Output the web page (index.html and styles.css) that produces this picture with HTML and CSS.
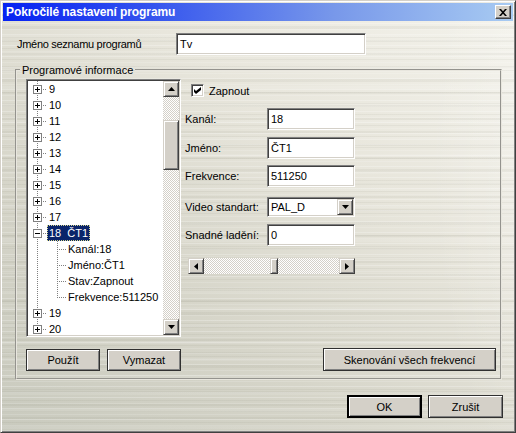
FILE: index.html
```html
<!DOCTYPE html>
<html>
<head>
<meta charset="utf-8">
<link rel="stylesheet" href="styles.css">
</head>
<body>
<div class="window">
  <div class="titlebar">
    <span class="title">Pokročilé nastavení programu</span>
    <span class="close"><svg width="8" height="7" viewBox="0 0 8 7"><path d="M0 0h2l2 2.3L6 0h2L5 3.5 8 7H6L4 4.7 2 7H0l3-3.5z" fill="#000"/></svg></span>
  </div>
  <div class="client">
    <div class="name-row">
      <span class="name-label">Jméno seznamu programů</span>
      <div class="edit name-edit">Tv</div>
    </div>
    <fieldset class="group">
      <legend>Programové informace</legend>
      <div class="group-grid">
        <div class="tree">
          <div class="tree-items">
            <div class="row"><span class="c root"><svg class="pbox" width="9" height="9"><rect x="0.5" y="0.5" width="8" height="8" fill="#fff" stroke="#808080"/><path d="M2 4.5h5M4.5 2v5" stroke="#000"/></svg></span><span class="t">9</span></div>
            <div class="row"><span class="c root"><svg class="pbox" width="9" height="9"><rect x="0.5" y="0.5" width="8" height="8" fill="#fff" stroke="#808080"/><path d="M2 4.5h5M4.5 2v5" stroke="#000"/></svg></span><span class="t">10</span></div>
            <div class="row"><span class="c root"><svg class="pbox" width="9" height="9"><rect x="0.5" y="0.5" width="8" height="8" fill="#fff" stroke="#808080"/><path d="M2 4.5h5M4.5 2v5" stroke="#000"/></svg></span><span class="t">11</span></div>
            <div class="row"><span class="c root"><svg class="pbox" width="9" height="9"><rect x="0.5" y="0.5" width="8" height="8" fill="#fff" stroke="#808080"/><path d="M2 4.5h5M4.5 2v5" stroke="#000"/></svg></span><span class="t">12</span></div>
            <div class="row"><span class="c root"><svg class="pbox" width="9" height="9"><rect x="0.5" y="0.5" width="8" height="8" fill="#fff" stroke="#808080"/><path d="M2 4.5h5M4.5 2v5" stroke="#000"/></svg></span><span class="t">13</span></div>
            <div class="row"><span class="c root"><svg class="pbox" width="9" height="9"><rect x="0.5" y="0.5" width="8" height="8" fill="#fff" stroke="#808080"/><path d="M2 4.5h5M4.5 2v5" stroke="#000"/></svg></span><span class="t">14</span></div>
            <div class="row"><span class="c root"><svg class="pbox" width="9" height="9"><rect x="0.5" y="0.5" width="8" height="8" fill="#fff" stroke="#808080"/><path d="M2 4.5h5M4.5 2v5" stroke="#000"/></svg></span><span class="t">15</span></div>
            <div class="row"><span class="c root"><svg class="pbox" width="9" height="9"><rect x="0.5" y="0.5" width="8" height="8" fill="#fff" stroke="#808080"/><path d="M2 4.5h5M4.5 2v5" stroke="#000"/></svg></span><span class="t">16</span></div>
            <div class="row"><span class="c root"><svg class="pbox" width="9" height="9"><rect x="0.5" y="0.5" width="8" height="8" fill="#fff" stroke="#808080"/><path d="M2 4.5h5M4.5 2v5" stroke="#000"/></svg></span><span class="t">17</span></div>
            <div class="row"><span class="c root"><svg class="pbox" width="9" height="9"><rect x="0.5" y="0.5" width="8" height="8" fill="#fff" stroke="#808080"/><path d="M2 4.5h5" stroke="#000"/></svg></span><span class="t sel">18  ČT1</span></div>
            <div class="row"><span class="c vline"></span><span class="c child"></span><span class="t">Kanál:18</span></div>
            <div class="row"><span class="c vline"></span><span class="c child"></span><span class="t">Jméno:ČT1</span></div>
            <div class="row"><span class="c vline"></span><span class="c child"></span><span class="t">Stav:Zapnout</span></div>
            <div class="row"><span class="c vline"></span><span class="c child last"></span><span class="t">Frekvence:511250</span></div>
            <div class="row"><span class="c root"><svg class="pbox" width="9" height="9"><rect x="0.5" y="0.5" width="8" height="8" fill="#fff" stroke="#808080"/><path d="M2 4.5h5M4.5 2v5" stroke="#000"/></svg></span><span class="t">19</span></div>
            <div class="row"><span class="c root"><svg class="pbox" width="9" height="9"><rect x="0.5" y="0.5" width="8" height="8" fill="#fff" stroke="#808080"/><path d="M2 4.5h5M4.5 2v5" stroke="#000"/></svg></span><span class="t">20</span></div>
          </div>
          <div class="vscroll">
            <span class="sbtn"><svg width="7" height="4"><path d="M3.5 0L7 4H0z" fill="#000"/></svg></span>
            <div class="vtrack"><span class="vthumb"></span></div>
            <span class="sbtn"><svg width="7" height="4"><path d="M0 0h7L3.5 4z" fill="#000"/></svg></span>
          </div>
        </div>
        <div class="form">
          <div class="check-row"><span class="checkbox"><svg width="7" height="7"><path d="M0 2l2 2 5-4v3L2 7 0 5z" fill="#000"/></svg></span><span>Zapnout</span></div>
          <div class="field f-kanal"><span class="flabel">Kanál:</span><div class="edit fedit">18</div></div>
          <div class="field f-jmeno"><span class="flabel">Jméno:</span><div class="edit fedit">ČT1</div></div>
          <div class="field f-frek"><span class="flabel">Frekvence:</span><div class="edit fedit">511250</div></div>
          <div class="field f-video"><span class="flabel">Video standart:</span><div class="combo"><span class="combo-text">PAL_D</span><span class="sbtn"><svg width="7" height="4"><path d="M0 0h7L3.5 4z" fill="#000"/></svg></span></div></div>
          <div class="field f-snad"><span class="flabel">Snadné ladění:</span><div class="edit fedit">0</div></div>
          <div class="hscroll">
            <span class="sbtn"><svg width="4" height="7"><path d="M0 3.5L4 0v7z" fill="#000"/></svg></span>
            <div class="htrack"><span class="hthumb"></span></div>
            <span class="sbtn"><svg width="4" height="7"><path d="M0 0l4 3.5L0 7z" fill="#000"/></svg></span>
          </div>
        </div>
        <div class="left-buttons">
          <span class="btn small">Použít</span>
          <span class="btn small">Vymazat</span>
        </div>
        <div class="scan-wrap"><span class="btn scan">Skenování všech frekvencí</span></div>
      </div>
    </fieldset>
    <div class="footer">
      <span class="btn big default">OK</span>
      <span class="btn big">Zrušit</span>
    </div>
  </div>
</div>
</body>
</html>
```
FILE: styles.css
```css
* { box-sizing: border-box; }
html, body { margin: 0; padding: 0; }
body {
  width: 516px;
  height: 433px;
  overflow: hidden;
  font-family: "Liberation Sans", Arial, sans-serif;
  font-size: 11px;
  color: #000;
}
.window {
  width: 516px;
  height: 433px;
  border: 1px solid;
  border-color: #d4d0c8 #404040 #404040 #d4d0c8;
  box-shadow: inset 1px 1px 0 #fff, inset -1px -1px 0 #808080;
  padding: 2px;
  display: flex;
  flex-direction: column;
  background:
    repeating-linear-gradient(180deg, rgba(255,255,255,.24) 0 1px, transparent 1px 3px, rgba(110,110,90,.07) 3px 4px, transparent 4px 6px, rgba(255,255,255,.14) 6px 7px, transparent 7px 11px),
    repeating-linear-gradient(180deg, rgba(90,90,70,.06) 0 2px, transparent 2px 13px),
    repeating-linear-gradient(180deg, rgba(255,255,255,.1) 0 3px, transparent 3px 17px),
    radial-gradient(ellipse 230px 520px at 600px 150px, rgba(255,255,255,.35), rgba(255,255,255,0) 75%),
    linear-gradient(215deg, #f4f3ec 0%, #e8e6dc 35%, #d6d5c9 68%, #c9cabe 100%);
}
.titlebar {
  height: 18px;
  flex: none;
  display: flex;
  align-items: center;
  justify-content: space-between;
  padding: 0 2px 0 3px;
  background: linear-gradient(to right, #0622f2 0%, #3656ee 30%, #7898ea 65%, #a8cbf2 100%);
}
.title {
  color: #fff;
  font-weight: bold;
  font-size: 12px;
  line-height: 18px;
  letter-spacing: -0.1px;
}
.close {
  width: 16px;
  height: 14px;
  display: flex;
  align-items: center;
  justify-content: center;
  background: #d4d0c8;
  border: 1px solid;
  border-color: #fff #404040 #404040 #fff;
  box-shadow: inset -1px -1px 0 #808080;
}
.client {
  flex: 1;
  display: flex;
  flex-direction: column;
  padding: 12px 10px 0 12px;
}
.name-row {
  display: flex;
  align-items: center;
  padding-left: 2px;
}
.name-label { width: 159px; letter-spacing: -0.3px; }
.edit {
  height: 22px;
  background: #fff;
  border: 1px solid;
  border-color: #808080 #fff #fff #808080;
  box-shadow: inset 1px 1px 0 #404040, inset -1px -1px 0 #d4d0c8;
  padding-left: 3px;
  line-height: 20px;
  white-space: nowrap;
}
.name-edit { width: 190px; }
.group {
  margin: 8px 0 0 0;
  width: 487px;
  border: 2px groove #e8e6de;
  padding: 2px 4px 7px 9px;
  min-width: 0;
}
.group legend {
  padding: 0 2px;
  margin-left: -6px;
  line-height: 14px;
}
.group-grid {
  display: grid;
  grid-template-columns: 155px 1fr;
  grid-template-rows: 258px 23px;
  column-gap: 4px;
  row-gap: 11px;
}
.tree {
  display: flex;
  background: #fff;
  border: 1px solid;
  border-color: #808080 #fff #fff #808080;
  box-shadow: inset 1px 1px 0 #404040, inset -1px -1px 0 #d4d0c8;
  padding: 1px;
}
.tree-items {
  flex: 1;
  overflow: hidden;
}
.row {
  height: 16px;
  display: flex;
  white-space: pre;
}
.c {
  width: 19px;
  height: 16px;
  flex: none;
  background-repeat: no-repeat;
}
.root {
  padding: 4px 0 0 5px;
  background-image:
    repeating-linear-gradient(to bottom, #808080 0 1px, transparent 1px 2px),
    repeating-linear-gradient(to right, #808080 0 1px, transparent 1px 2px);
  background-size: 1px 16px, 10px 1px;
  background-position: 9px 0, 9px 8px;
}
.pbox { display: block; }
.vline {
  background-image: repeating-linear-gradient(to bottom, #808080 0 1px, transparent 1px 2px);
  background-size: 1px 16px;
  background-position: 9px 0;
}
.child {
  background-image:
    repeating-linear-gradient(to bottom, #808080 0 1px, transparent 1px 2px),
    repeating-linear-gradient(to right, #808080 0 1px, transparent 1px 2px);
  background-size: 1px 16px, 9px 1px;
  background-position: 10px 0, 10px 8px;
}
.child.last {
  background-size: 1px 9px, 9px 1px;
}
.t {
  padding: 0 2px;
  line-height: 16px;
  height: 16px;
}
.t.sel {
  background: #0a246a;
  color: #fff;
  outline: 1px dotted #d8d890;
  outline-offset: -1px;
}
.vscroll {
  width: 16px;
  flex: none;
  display: flex;
  flex-direction: column;
}
.sbtn {
  width: 16px;
  height: 16px;
  flex: none;
  display: flex;
  align-items: center;
  justify-content: center;
  background: #d4d0c8;
  border: 1px solid;
  border-color: #d4d0c8 #404040 #404040 #d4d0c8;
  box-shadow: inset 1px 1px 0 #fff, inset -1px -1px 0 #808080;
}
.sbtn svg { display: block; }
.vtrack, .htrack {
  flex: 1;
  background: repeating-conic-gradient(#fff 0 25%, #d4d0c8 0 50%) 0 0 / 2px 2px;
  display: flex;
}
.vtrack { flex-direction: column; }
.vthumb, .hthumb {
  display: block;
  background: #d4d0c8;
  border: 1px solid;
  border-color: #d4d0c8 #404040 #404040 #d4d0c8;
  box-shadow: inset 1px 1px 0 #fff, inset -1px -1px 0 #808080;
}
.vthumb { margin-top: 23px; height: 50px; }
.hthumb { margin-left: 66px; width: 8px; }
.form {
  display: flex;
  flex-direction: column;
}
.check-row {
  margin: 5px 0 0 6px;
  height: 13px;
  display: flex;
  align-items: center;
  gap: 5px;
}
.checkbox {
  width: 13px;
  height: 13px;
  display: flex;
  align-items: center;
  justify-content: center;
  background: #fff;
  border: 1px solid;
  border-color: #808080 #fff #fff #808080;
  box-shadow: inset 1px 1px 0 #404040, inset -1px -1px 0 #d4d0c8;
}
.checkbox svg { display: block; }
.field {
  display: flex;
  align-items: center;
}
.flabel { width: 82px; white-space: nowrap; }
.fedit { width: 88px; }
.f-kanal { margin-top: 11px; }
.f-jmeno { margin-top: 7px; }
.f-frek { margin-top: 6px; }
.f-video { margin-top: 10px; }
.f-snad { margin-top: 7px; }
.combo {
  width: 88px;
  height: 20px;
  display: flex;
  background: #fff;
  border: 1px solid;
  border-color: #808080 #fff #fff #808080;
  box-shadow: inset 1px 1px 0 #404040, inset -1px -1px 0 #d4d0c8;
  padding: 1px;
}
.combo-text {
  flex: 1;
  padding-left: 2px;
  line-height: 16px;
}
.hscroll {
  margin: 12px 0 0 3px;
  width: 167px;
  height: 16px;
  display: flex;
}
.left-buttons {
  display: flex;
  gap: 7px;
  align-self: end;
}
.scan-wrap {
  display: flex;
  justify-content: flex-end;
}
.btn {
  display: flex;
  align-items: center;
  justify-content: center;
  background: #d4d0c8;
  border: 1px solid #303030;
  box-shadow: inset 1px 1px 0 #fff, inset -1px -1px 0 #808080;
  white-space: nowrap;
}
.btn.small { width: 74px; height: 22px; }
.btn.scan { width: 173px; height: 23px; }
.btn.big { width: 75px; height: 23px; }
.btn.default {
  border: 2px solid #000;
}
.footer {
  margin-top: 15px;
  display: flex;
  justify-content: flex-end;
  gap: 6px;
}
```
